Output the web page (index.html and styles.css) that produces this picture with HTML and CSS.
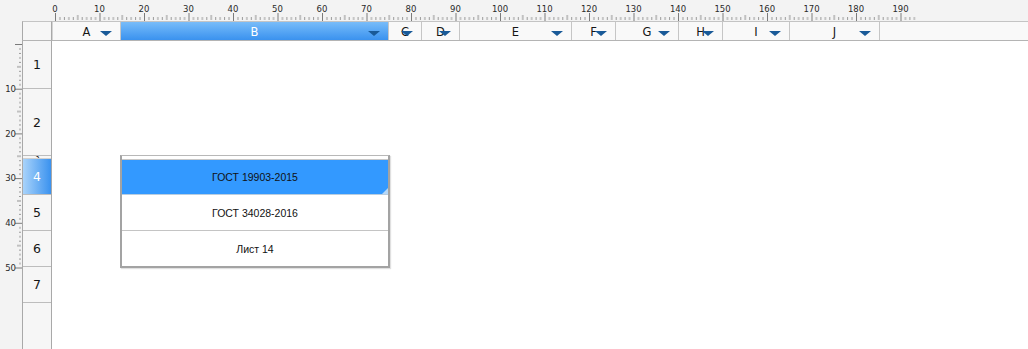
FILE: index.html
```html
<!DOCTYPE html>
<html lang="ru">
<head>
<meta charset="utf-8">
<title>Sheet</title>
<link rel="stylesheet" href="styles.css">
</head>
<body>
<div class="app">
  <svg class="ruler-left" width="22" height="349" viewBox="0 0 22 349">
    <defs>
      <pattern id="vt" patternUnits="userSpaceOnUse" x="0" y="44" width="22" height="44.7">
        <rect x="15" y="0" width="7" height="1" fill="#7a7a7a"/>
        <rect x="19" y="4.47" width="2" height="1" fill="#999999"/>
        <rect x="19" y="8.94" width="2" height="1" fill="#999999"/>
        <rect x="19" y="13.41" width="2" height="1" fill="#999999"/>
        <rect x="19" y="17.88" width="2" height="1" fill="#999999"/>
        <rect x="17" y="22.35" width="4" height="1" fill="#909090"/>
        <rect x="19" y="26.82" width="2" height="1" fill="#999999"/>
        <rect x="19" y="31.29" width="2" height="1" fill="#999999"/>
        <rect x="19" y="35.76" width="2" height="1" fill="#999999"/>
        <rect x="19" y="40.23" width="2" height="1" fill="#999999"/>
      </pattern>
    </defs>
    <rect x="0" y="44" width="22" height="225" fill="url(#vt)"/>
    <g class="rl-text">
      <text x="16" y="92">10</text>
      <text x="16" y="137">20</text>
      <text x="16" y="181">30</text>
      <text x="16" y="226">40</text>
      <text x="16" y="271">50</text>
    </g>
  </svg>

  <svg class="ruler-top" width="1006" height="21" viewBox="0 0 1006 21">
    <defs>
      <pattern id="ht" patternUnits="userSpaceOnUse" x="33" y="0" width="44.5" height="21">
        <rect x="0" y="13" width="1" height="8" fill="#7a7a7a"/>
        <rect x="4.45" y="17" width="1" height="3" fill="#999999"/>
        <rect x="8.9" y="17" width="1" height="3" fill="#999999"/>
        <rect x="13.35" y="17" width="1" height="3" fill="#999999"/>
        <rect x="17.8" y="17" width="1" height="3" fill="#999999"/>
        <rect x="22.25" y="15" width="1" height="5" fill="#909090"/>
        <rect x="26.7" y="17" width="1" height="3" fill="#999999"/>
        <rect x="31.15" y="17" width="1" height="3" fill="#999999"/>
        <rect x="35.6" y="17" width="1" height="3" fill="#999999"/>
        <rect x="40.05" y="17" width="1" height="3" fill="#999999"/>
      </pattern>
    </defs>
    <rect x="33" y="0" width="862" height="21" fill="url(#ht)"/>
    <g class="rt-text">
      <text x="33" y="12">0</text>
      <text x="77.5" y="12">10</text>
      <text x="122" y="12">20</text>
      <text x="166.5" y="12">30</text>
      <text x="211" y="12">40</text>
      <text x="255.5" y="12">50</text>
      <text x="300" y="12">60</text>
      <text x="344.5" y="12">70</text>
      <text x="389" y="12">80</text>
      <text x="433.5" y="12">90</text>
      <text x="478" y="12">100</text>
      <text x="522.5" y="12">110</text>
      <text x="567" y="12">120</text>
      <text x="611.5" y="12">130</text>
      <text x="656" y="12">140</text>
      <text x="700.5" y="12">150</text>
      <text x="745" y="12">160</text>
      <text x="789.5" y="12">170</text>
      <text x="834" y="12">180</text>
      <text x="878.5" y="12">190</text>
    </g>
  </svg>

  <div class="corner"></div>

  <div class="colheads">
    <div class="ch w-a">A<span class="tri"></span></div>
    <div class="ch w-b sel">B<span class="tri"></span></div>
    <div class="ch w-c">C<span class="tri"></span></div>
    <div class="ch w-d">D<span class="tri"></span></div>
    <div class="ch w-e">E<span class="tri"></span></div>
    <div class="ch w-f">F<span class="tri"></span></div>
    <div class="ch w-g">G<span class="tri"></span></div>
    <div class="ch w-h">H<span class="tri"></span></div>
    <div class="ch w-i">I<span class="tri"></span></div>
    <div class="ch w-j">J<span class="tri"></span></div>
  </div>

  <div class="rowheads">
    <div class="rh h1">1</div>
    <div class="rh h2">2</div>
    <div class="rh h3">3</div>
    <div class="rh h4 sel">4</div>
    <div class="rh h5">5</div>
    <div class="rh h6">6</div>
    <div class="rh h7">7</div>
  </div>

  <div class="cells"></div>

  <div class="dropdown">
    <div class="dd-top"></div>
    <div class="dd-item active">ГОСТ 19903-2015<span class="grip"></span></div>
    <div class="dd-item">ГОСТ 34028-2016</div>
    <div class="dd-item last">Лист 14</div>
  </div>
</div>
</body>
</html>
```

FILE: styles.css
```css
* { box-sizing: border-box; }
html, body { margin: 0; padding: 0; background: #ffffff; }
body { width: 1028px; height: 349px; overflow: hidden; }

.app {
  position: relative;
  width: 1028px;
  height: 349px;
  display: grid;
  grid-template-columns: 22px 30px 1fr;
  grid-template-rows: 21px 20px 1fr;
  background: #ffffff;
  font-family: "DejaVu Sans", "Liberation Sans", sans-serif;
}

.ruler-left {
  grid-column: 1;
  grid-row: 1 / 4;
  display: block;
  background: #f3f3f3;
}
.ruler-top {
  grid-column: 2 / 4;
  grid-row: 1;
  display: block;
  background: #f3f3f3;
}
.rt-text text {
  font-family: "DejaVu Sans", sans-serif;
  font-size: 8.5px;
  fill: #2a2a2a;
  text-anchor: middle;
}
.rl-text text {
  font-family: "DejaVu Sans", sans-serif;
  font-size: 8.5px;
  fill: #2a2a2a;
  text-anchor: end;
}

.corner {
  grid-column: 2;
  grid-row: 2;
  background: #f6f6f6;
  border-top: 1px solid #c4c4c4;
  border-left: 1px solid #a9a9a9;
  border-right: 1px solid #a9a9a9;
  border-bottom: 1px solid #b4b4b4;
}

.colheads {
  grid-column: 3;
  grid-row: 2;
  display: flex;
  background: #f9f9f9;
  border-top: 1px solid #c4c4c4;
  border-bottom: 1px solid #b4b4b4;
}
.ch {
  position: relative;
  display: flex;
  align-items: center;
  justify-content: center;
  height: 100%;
  border-right: 1px solid #c6c6c6;
  font-size: 11.5px;
  color: #151515;
  padding-top: 1px;
}
.ch.sel {
  background: linear-gradient(#78bcf9, #3a92ef);
  color: #ffffff;
}
.tri {
  position: absolute;
  right: 8px;
  top: 9px;
  width: 0;
  height: 0;
  border-left: 6px solid transparent;
  border-right: 6px solid transparent;
  border-top: 5px solid #195a98;
}
.w-a { width: 69px; border-left: 1px solid #d4d4d4; }
.w-b { width: 268px; }
.w-c { width: 33px; }
.w-d { width: 38px; }
.w-e { width: 112px; }
.w-f { width: 44px; }
.w-g { width: 63px; }
.w-h { width: 44px; }
.w-i { width: 67px; }
.w-j { width: 90px; }

.rowheads {
  grid-column: 2;
  grid-row: 3;
  display: flex;
  flex-direction: column;
  background: #f6f6f6;
  border-left: 1px solid #a9a9a9;
  border-right: 1px solid #a9a9a9;
}
.rh {
  display: flex;
  align-items: center;
  justify-content: center;
  border-bottom: 1px solid #bdbdbd;
  font-size: 12.5px;
  color: #151515;
  overflow: hidden;
  flex: none;
}
.rh.sel {
  background: linear-gradient(90deg, #a9d3fa, #3a92ef);
  color: #ffffff;
}
.h1 { height: 48px; }
.h2 { height: 67px; }
.h3 { height: 3px; font-size: 8px; border-bottom-color: #d0d0d0; }
.h4 { height: 36px; }
.h5 { height: 36px; }
.h6 { height: 36px; }
.h7 { height: 36px; }

.cells {
  grid-column: 3;
  grid-row: 3;
  background: #ffffff;
}

.dropdown {
  position: absolute;
  left: 120px;
  top: 155px;
  width: 270px;
  height: 113px;
  display: flex;
  flex-direction: column;
  background: #ffffff;
  border-left: 2px solid #a3a3a3;
  border-right: 2px solid #a3a3a3;
  border-bottom: 2px solid #a3a3a3;
  border-top: 1px solid #b8b8b8;
  box-shadow: 1px 1px 1px rgba(0,0,0,0.12);
  font-family: "Liberation Sans", Arial, sans-serif;
  font-size: 10.5px;
  color: #111111;
}
.dd-top {
  height: 4px;
  flex: none;
  border-bottom: 1px solid #c8c8c8;
  background: #ffffff;
}
.dd-item {
  position: relative;
  height: 36px;
  flex: none;
  display: flex;
  align-items: center;
  justify-content: center;
  border-bottom: 1px solid #c4c4c4;
}
.dd-item.active {
  height: 35px;
  background: #3399ff;
  border-bottom-color: #b8cde0;
}
.dd-item.last {
  border-bottom: none;
  flex: 1;
}
.grip {
  position: absolute;
  right: 0;
  bottom: 0;
  width: 0;
  height: 0;
  border-left: 6px solid transparent;
  border-bottom: 6px solid #b6d8f8;
}
```
